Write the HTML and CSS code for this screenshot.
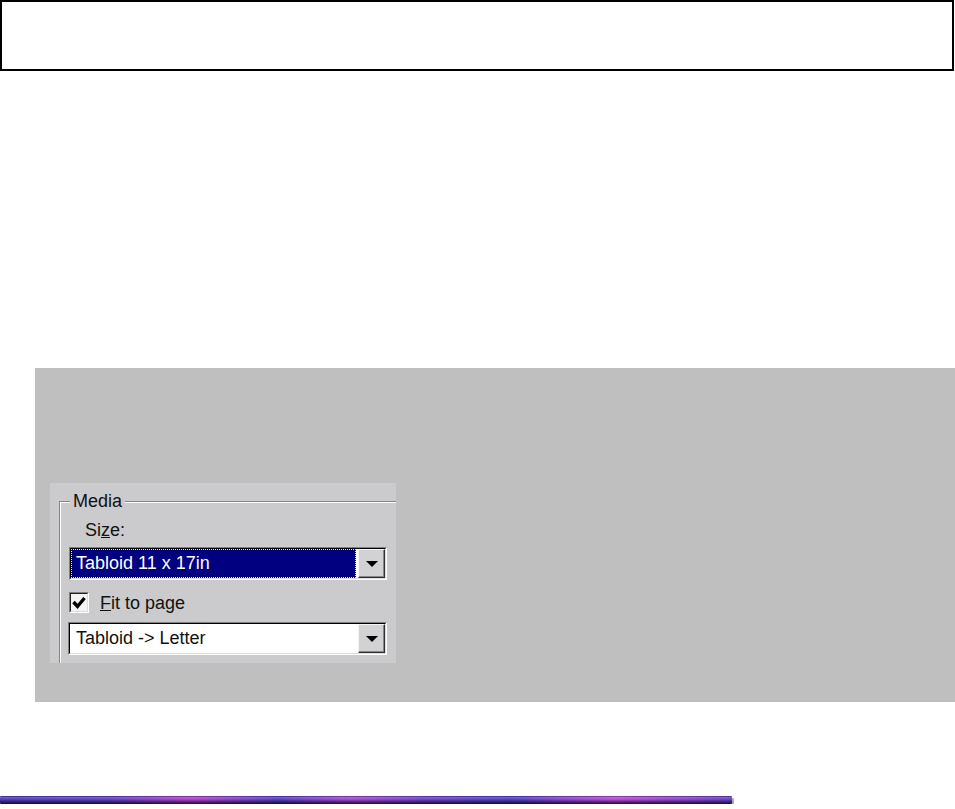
FILE: index.html
```html
<!DOCTYPE html>
<html>
<head>
<meta charset="utf-8">
<link rel="stylesheet" href="styles.css">
</head>
<body>
<div class="header"></div>
<div class="panel">
  <div class="dialog">
    <div class="group">
      <div class="legend">Media</div>
      <div class="size-label">Si<u>z</u>e:</div>
      <div class="combo">
        <div class="combo-in">
          <div class="value"><div class="sel">Tabloid 11 x 17in</div></div>
          <div class="btn"><span class="arrow"></span></div>
        </div>
      </div>
      <div class="check-row">
        <div class="checkbox">
          <div class="checkbox-in">
            <svg width="16" height="17" viewBox="0 0 16 17"><path d="M2.5 8 L6.5 12.5 L13.5 4" fill="none" stroke="#000" stroke-width="3.4"/></svg>
          </div>
        </div>
        <span class="check-label"><u>F</u>it to page</span>
      </div>
      <div class="combo combo2">
        <div class="combo-in">
          <div class="value"><div class="plain">Tabloid -&gt; Letter</div></div>
          <div class="btn"><span class="arrow"></span></div>
        </div>
      </div>
    </div>
  </div>
</div>
<div class="bar"></div>
</body>
</html>
```
FILE: styles.css
```css
body {
  margin: 0;
  background: #fff;
  font-family: "Liberation Sans", Arial, sans-serif;
}
.header {
  width: 954px;
  height: 71px;
  border: 2px solid #000;
  box-sizing: border-box;
}
.panel {
  margin: 297px 0 0 35px;
  width: 920px;
  height: 334px;
  background: #bfbfbf;
  padding: 115px 0 0 15px;
  box-sizing: border-box;
}
.dialog {
  width: 346px;
  height: 180px;
  background: #cbcbce;
  overflow: hidden;
}
.group {
  position: relative;
  margin: 18px 0 0 9px;
  width: 400px;
  height: 220px;
  box-sizing: border-box;
  border-top: 1px solid #858588;
  border-left: 1px solid #858588;
  box-shadow: inset 1px 1px 0 #fff;
  padding: 18px 0 0 9px;
  font-size: 18px;
  color: #000;
}
.legend {
  position: absolute;
  top: -11px;
  left: 10px;
  padding: 0 3px;
  line-height: 20px;
  background: #cbcbce;
  color: #111;
}
.size-label {
  margin-left: 16px;
  line-height: 20px;
  height: 20px;
  color: #111;
}
.combo {
  margin-top: 7px;
  width: 318px;
  height: 33px;
  box-sizing: border-box;
  border: 1px solid;
  border-color: #808080 #fff #fff #808080;
}
.combo2 {
  margin-top: 9px;
  margin-left: -1px;
  width: 319px;
}
.combo-in {
  height: 100%;
  box-sizing: border-box;
  border: 1px solid;
  border-color: #000 #dcdcdc #dcdcdc #000;
  background: #fff;
  display: flex;
}
.value {
  flex: 1;
  height: 100%;
}
.sel {
  height: 100%;
  box-sizing: border-box;
  background: #000080;
  color: #fff;
  outline: 1px dotted #f4f070;
  outline-offset: -1px;
  padding-left: 5px;
  line-height: 29px;
}
.plain {
  padding-left: 6px;
  line-height: 29px;
  color: #111;
}
.btn {
  width: 27px;
  margin-left: 2px;
  box-sizing: border-box;
  background: #d2d2d4;
  border: 1px solid;
  border-color: #f4f4f4 #303030 #303030 #f4f4f4;
  box-shadow: inset -1px -1px 0 #858588;
  display: flex;
  align-items: center;
  justify-content: center;
}
.arrow {
  width: 0;
  height: 0;
  border-left: 6px solid transparent;
  border-right: 6px solid transparent;
  border-top: 6px solid #000;
  margin-top: 1px;
}
.check-row {
  margin-top: 12px;
  display: flex;
  align-items: center;
  gap: 11px;
  height: 21px;
}
.checkbox {
  width: 20px;
  height: 21px;
  box-sizing: border-box;
  border: 1px solid;
  border-color: #808080 #fff #fff #808080;
}
.checkbox-in {
  height: 100%;
  box-sizing: border-box;
  border: 1px solid;
  border-color: #202020 #dcdcdc #dcdcdc #202020;
  background: #f4f4f4;
  display: flex;
}
.check-label {
  line-height: 20px;
  color: #111;
}
.bar {
  margin-top: 94px;
  width: 732px;
  height: 8px;
  border-radius: 1px;
  background:
    linear-gradient(to bottom, rgba(40,0,80,0.5) 0, rgba(255,255,255,0.18) 20%, rgba(255,255,255,0) 45%, rgba(20,0,40,0.45) 70%, rgba(10,0,25,0.85) 100%),
    linear-gradient(to right, #4a3cb8 0, #5a40c0 15%, #b040c8 26%, #5040c0 38%, #a048cc 48%, #6a40c4 58%, #4a40c0 70%, #b848d0 84%, #6040c0 100%);
  box-shadow: 2px 2px 1px #a8a8a8;
}
```
